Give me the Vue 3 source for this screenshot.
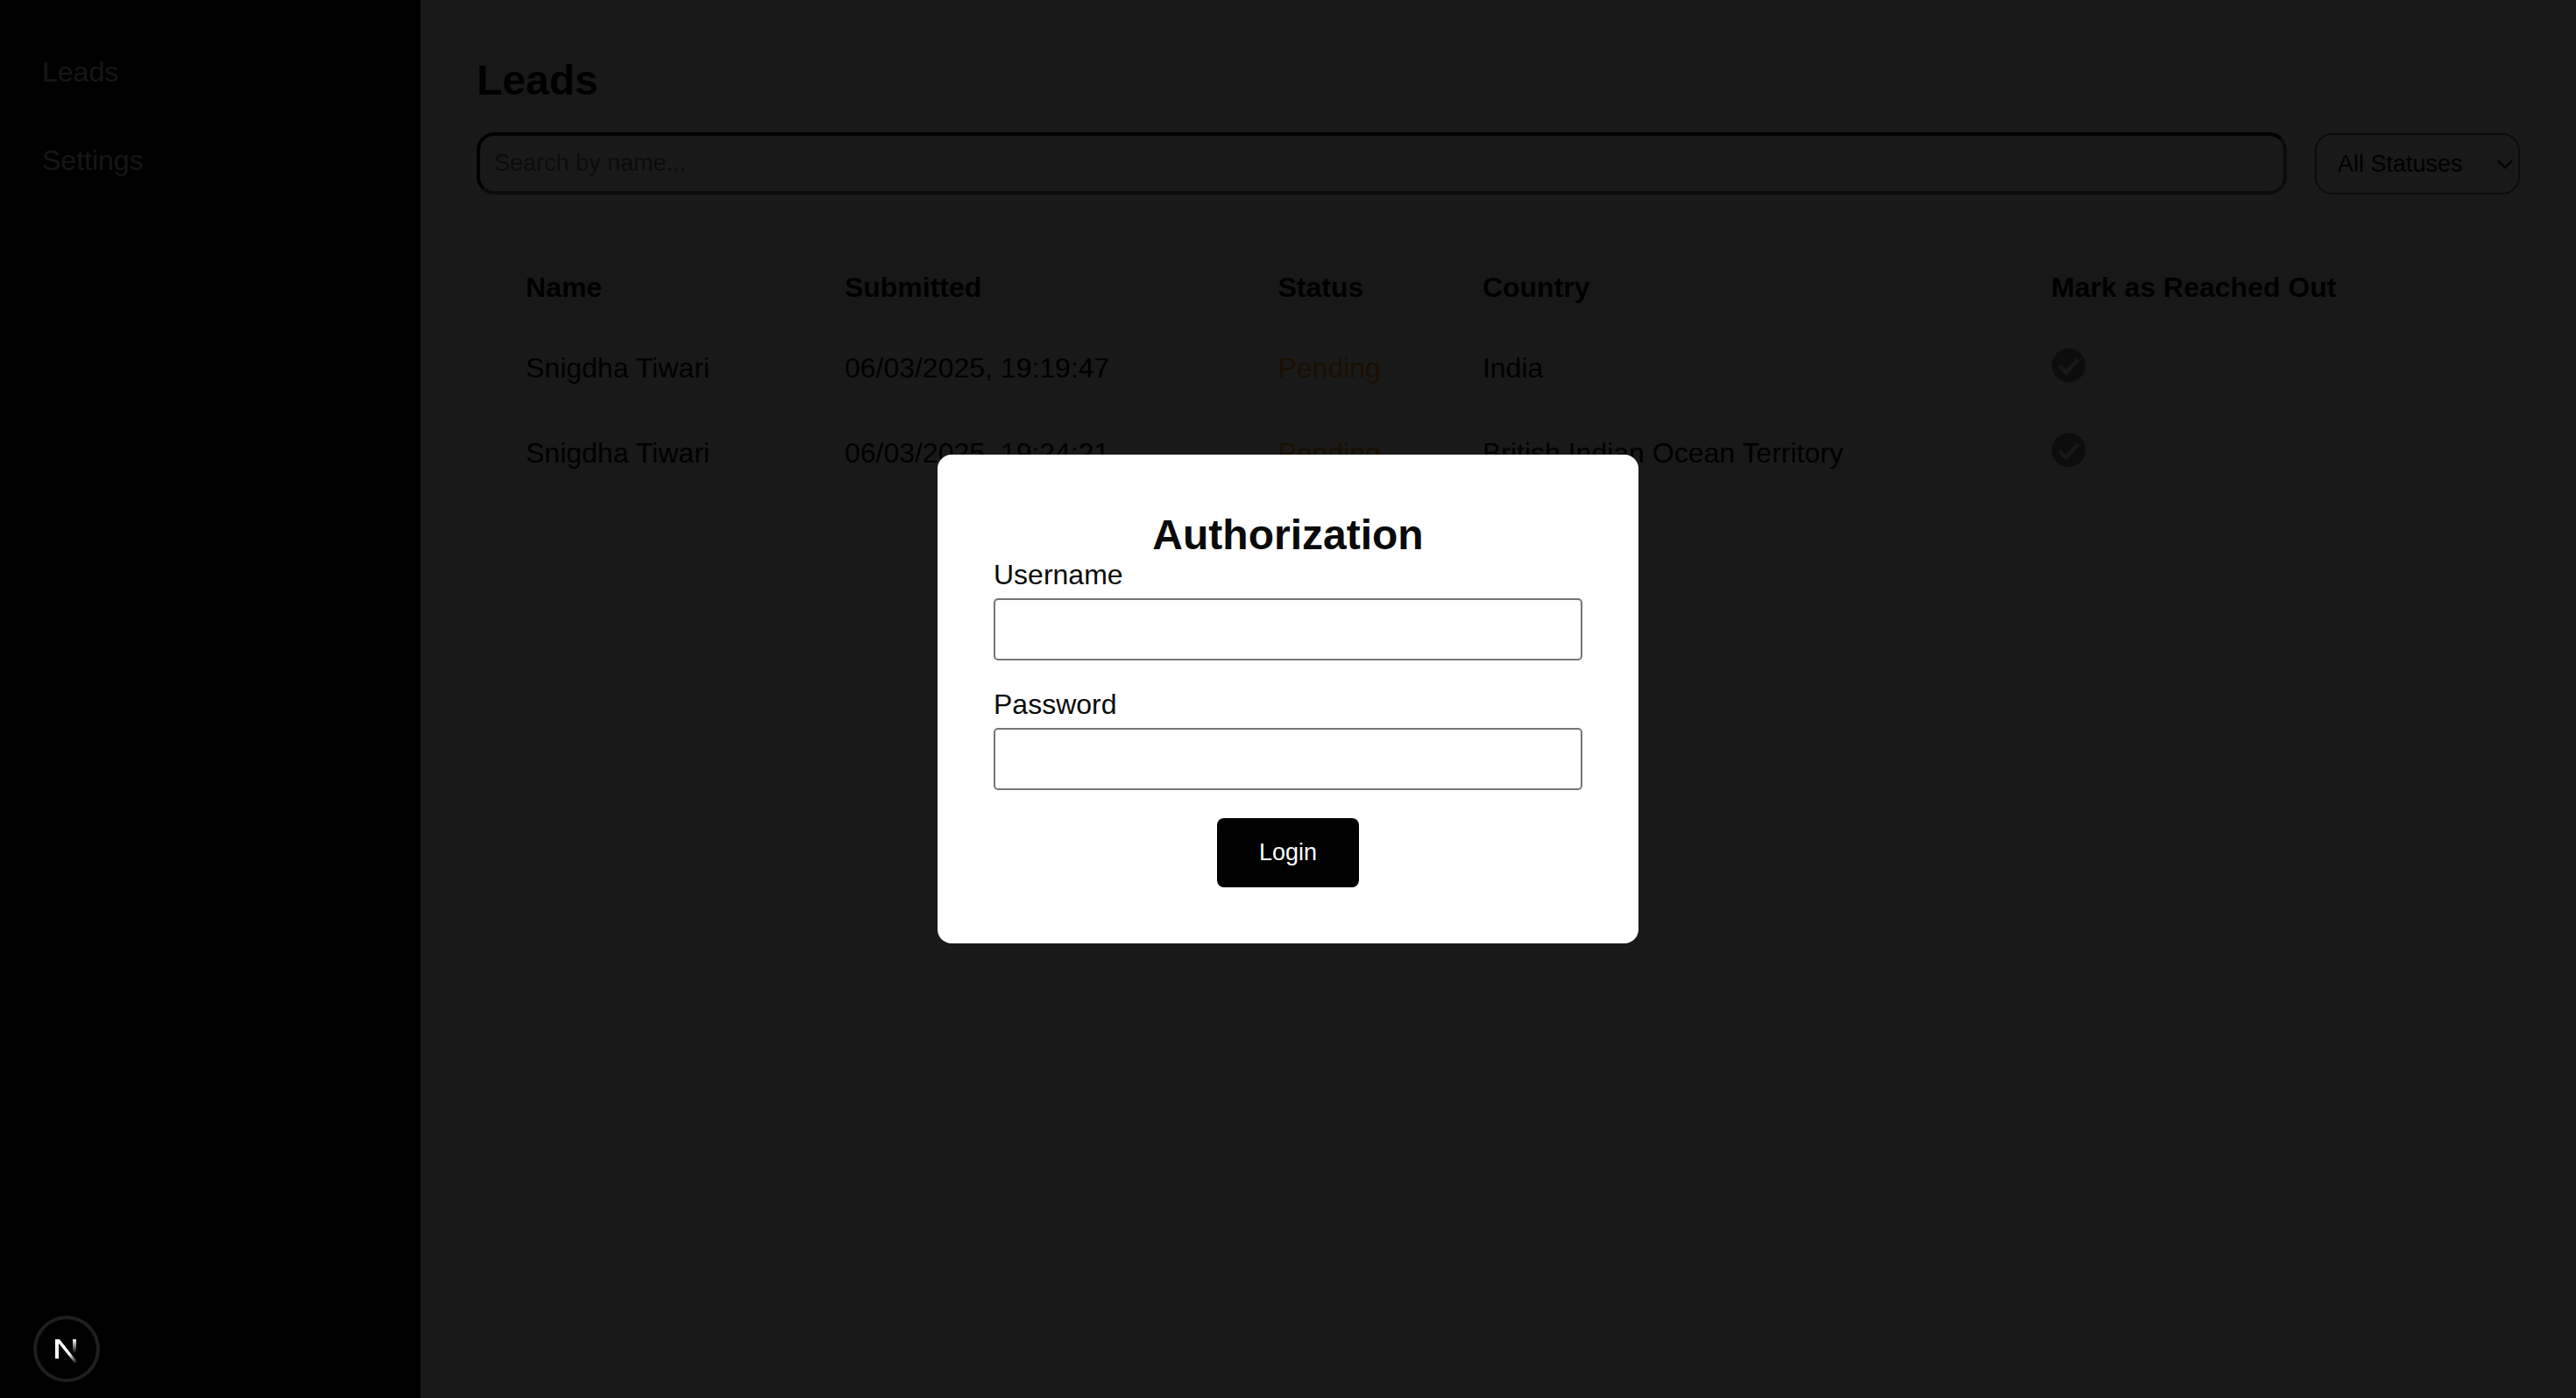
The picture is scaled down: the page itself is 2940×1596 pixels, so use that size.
<script setup>
import { ref } from 'vue'

const search = ref('')
const status = ref('all')
const username = ref('')
const password = ref('')

const leads = [
  { name: 'Snigdha Tiwari', submitted: '06/03/2025, 19:19:47', status: 'Pending', country: 'India' },
  { name: 'Snigdha Tiwari', submitted: '06/03/2025, 19:24:21', status: 'Pending', country: 'British Indian Ocean Territory' },
]
</script>

<template>
  <div class="layout">
    <nav class="sidebar">
      <a href="#leads">Leads</a>
      <a href="#settings">Settings</a>
    </nav>

    <main class="main">
      <h1>Leads</h1>
      <div class="filters">
        <input v-model="search" class="search" type="text" placeholder="Search by name..." aria-label="Search by name" />
        <div class="select-wrap">
          <select v-model="status" aria-label="Status">
            <option value="all">All Statuses</option>
            <option value="pending">Pending</option>
            <option value="reached">Reached Out</option>
          </select>
          <svg class="chevron" viewBox="0 0 18 12" aria-hidden="true">
            <path d="M1 1.500 9 9.500 17 1.500" fill="none" stroke="#000" stroke-width="2" />
          </svg>
        </div>
      </div>

      <div class="card">
        <table>
          <thead>
            <tr>
              <th>Name</th>
              <th>Submitted</th>
              <th>Status</th>
              <th>Country</th>
              <th>Mark as Reached Out</th>
            </tr>
          </thead>
          <tbody>
            <tr v-for="lead in leads" :key="lead.submitted">
              <td>{{ lead.name }}</td>
              <td>{{ lead.submitted }}</td>
              <td class="pending">{{ lead.status }}</td>
              <td>{{ lead.country }}</td>
              <td>
                <button class="mark" type="button" aria-label="Mark as reached out">
                  <svg viewBox="0 0 40 40" aria-hidden="true">
                    <circle cx="20" cy="20" r="19.400" fill="#808080" />
                    <path d="M9.300 20.600 17 28.300 30.700 13.400" fill="none" stroke="#fff" stroke-width="4.400" />
                  </svg>
                </button>
              </td>
            </tr>
          </tbody>
        </table>
      </div>
    </main>

    <div class="overlay">
      <form class="modal" role="dialog" aria-labelledby="auth-title" @submit.prevent>
        <h2 id="auth-title">Authorization</h2>
        <label for="username">Username</label>
        <input id="username" v-model="username" type="text" />
        <label for="password">Password</label>
        <input id="password" v-model="password" type="password" />
        <button class="login" type="submit">Login</button>
      </form>
    </div>

    <button class="badge" type="button" aria-label="Open Next.js Dev Tools">
      <svg viewBox="0 0 76 76" aria-hidden="true">
        <defs>
          <linearGradient id="diag" x1="42" y1="43" x2="50" y2="54" gradientUnits="userSpaceOnUse">
            <stop stop-color="#fff" />
            <stop offset="1" stop-color="#fff" stop-opacity="0" />
          </linearGradient>
          <linearGradient id="stem" x1="46" y1="27" x2="46" y2="43" gradientUnits="userSpaceOnUse">
            <stop stop-color="#fff" />
            <stop offset="1" stop-color="#fff" stop-opacity="0" />
          </linearGradient>
        </defs>
        <path d="M25 27h5L50 52.500l-2.500 2L29 31.500V49h-4Z" fill="url(#diag)" />
        <path d="M45 27h4v17h-4Z" fill="url(#stem)" />
      </svg>
    </button>
  </div>
</template>

<style>
body {
  margin: 0;
  background: #fafafa;
}
</style>

<style scoped>
.layout,
.layout * {
  box-sizing: border-box;
}

.layout {
  display: flex;
  min-height: 100vh;
  background: #fafafa;
  color: #000;
  font-family: "Liberation Sans", Arial, Helvetica, sans-serif;
  font-size: 32px;
  line-height: 37px;
}

.sidebar {
  flex: 0 0 480px;
  display: flex;
  flex-direction: column;
  gap: 64px;
  padding: 64px 48px;
  background: #000;
}

.sidebar a {
  color: #ddd;
  text-decoration: none;
}

.main {
  flex: 1;
  min-width: 0;
  padding: 64px;
}

h1,
h2 {
  margin: 0;
  font-size: 48px;
  line-height: 55px;
  font-weight: 700;
}

h1 {
  margin-bottom: 32px;
}

.filters {
  display: flex;
  align-items: flex-end;
  gap: 32px;
  margin-bottom: 32px;
}

.search {
  flex: 1;
  min-width: 0;
  height: 71px;
  padding: 16px;
  border: 4px solid;
  border-color: #000 #767676 #767676 #000;
  border-radius: 20px;
  background: #fff;
  font: inherit;
  font-size: 27px;
  outline: none;
}

.search::placeholder {
  color: #757575;
  opacity: 1;
}

.select-wrap {
  position: relative;
  display: flex;
}

select {
  appearance: none;
  width: 234px;
  height: 70px;
  padding: 0 24px;
  border: 2px solid #767676;
  border-radius: 20px;
  background: #fff;
  color: #000;
  font: inherit;
  font-size: 27px;
}

.chevron {
  position: absolute;
  right: 8px;
  top: 30px;
  width: 18px;
  height: 12px;
  pointer-events: none;
}

.card {
  padding: 32px;
  border-radius: 16px;
  background: #fff;
  box-shadow: 0 4px 16px rgba(0, 0, 0, 0.05);
}

table {
  width: 100%;
  border-collapse: collapse;
}

th,
td {
  padding: 24px;
  border-bottom: 2px solid #eee;
  text-align: left;
}

th {
  background: #f4f4f4;
  font-weight: 700;
}

.pending {
  color: #ff8c00;
}

.mark {
  display: block;
  padding: 0 0 7px;
  border: 0;
  background: none;
}

.mark svg {
  display: block;
  width: 40px;
  height: 40px;
}

.overlay {
  position: fixed;
  inset: 0;
  display: flex;
  align-items: center;
  justify-content: center;
  background: rgba(0, 0, 0, 0.9);
}

.modal {
  display: flex;
  flex-direction: column;
  width: 800px;
  padding: 64px;
  border-radius: 16px;
  background: #fff;
  color: #0a0a0a;
}

.modal h2 {
  text-align: center;
}

.modal label {
  margin-bottom: 8px;
}

.modal input {
  height: 71px;
  margin: 0 0 32px;
  padding: 16px;
  border: 2px solid #767676;
  border-radius: 5px;
  background: #fff;
  font: inherit;
  font-size: 27px;
}

.login {
  align-self: center;
  padding: 24px 48px;
  border: 0;
  border-radius: 8px;
  background: #000;
  color: #fff;
  font: inherit;
  font-size: 27px;
  line-height: 31px;
}

.badge {
  position: fixed;
  left: 38px;
  bottom: 18px;
  width: 76px;
  height: 76px;
  padding: 0;
  border: 0;
  border-radius: 50%;
  background: #000;
  box-shadow: inset 0 0 0 4px #1f1f1f;
}

.badge svg {
  display: block;
  width: 76px;
  height: 76px;
}
</style>
